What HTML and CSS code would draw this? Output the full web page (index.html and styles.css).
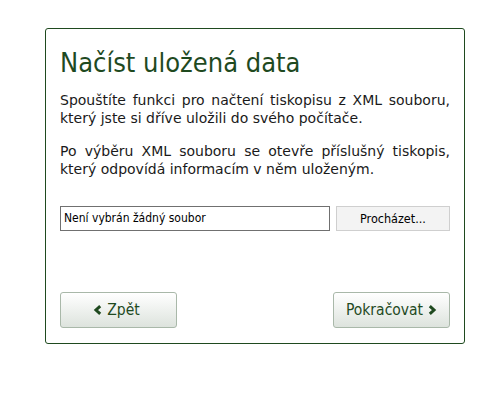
FILE: index.html
```html
<!DOCTYPE html>
<html lang="cs">
<head>
<meta charset="utf-8">
<title>Načíst uložená data</title>
<link rel="stylesheet" href="styles.css">
</head>
<body>
<div class="box">
  <h1 class="title">Načíst uložená data</h1>
  <p class="text">Spouštíte funkci pro načtení tiskopisu z XML souboru, který jste si dříve uložili do svého počítače.</p>
  <p class="text">Po výběru XML souboru se otevře příslušný tiskopis, který odpovídá informacím v něm uloženým.</p>
  <div class="file-row">
    <div class="file-name">Není vybrán žádný soubor</div>
    <button class="browse">Procházet...</button>
  </div>
  <div class="nav">
    <button class="btn btn-back"><svg class="chev" viewBox="0 0 9 10" width="9" height="10"><path d="M7.2 1.2 L3 5 L7.2 8.8" fill="none" stroke="currentColor" stroke-width="3" stroke-linejoin="miter"/></svg>Zpět</button>
    <button class="btn btn-next">Pokračovat<svg class="chev" viewBox="0 0 9 10" width="9" height="10"><path d="M1.8 1.2 L6 5 L1.8 8.8" fill="none" stroke="currentColor" stroke-width="3" stroke-linejoin="miter"/></svg></button>
  </div>
</div>
</body>
</html>
```
FILE: styles.css
```css
html, body {
  margin: 0;
  padding: 0;
  background: #fff;
}
body {
  font-family: "DejaVu Sans", sans-serif;
  color: #1a1a1a;
}
.box {
  box-sizing: border-box;
  margin: 28px 0 0 45px;
  width: 420px;
  height: 316px;
  border: 1px solid #1f4a1f;
  border-radius: 3px;
  padding: 16px 14px 14px 14px;
  display: flex;
  flex-direction: column;
}
.title {
  margin: 0;
  font-family: "DejaVu Sans Condensed", "DejaVu Sans", sans-serif;
  font-weight: normal;
  font-size: 27px;
  line-height: 36px;
  color: #1f4a1f;
}
.text {
  margin: 10px 0 0 0;
  font-size: 14px;
  line-height: 18px;
  text-align: justify;
}
.text + .text {
  margin-top: 15px;
}
.file-row {
  display: flex;
  margin-top: 28px;
  gap: 6px;
  height: 25px;
}
.file-name {
  box-sizing: border-box;
  width: 272px;
  height: 25px;
  border: 1px solid #707070;
  padding: 0 3px;
  font-family: "DejaVu Sans Condensed", "DejaVu Sans", sans-serif;
  font-size: 12px;
  line-height: 23px;
  color: #000;
}
.browse {
  box-sizing: border-box;
  width: 115px;
  height: 25px;
  border: 1px solid #cfcfcf;
  background: #f3f3f3;
  font-family: "DejaVu Sans Condensed", "DejaVu Sans", sans-serif;
  font-size: 12.5px;
  color: #000;
  padding: 0;
}
.nav {
  margin-top: auto;
  display: flex;
  justify-content: space-between;
}
.btn {
  box-sizing: border-box;
  width: 117px;
  height: 36px;
  border: 1px solid #a9b8a9;
  border-radius: 3px;
  background: linear-gradient(#ffffff, #dde3dd);
  color: #1f4a1f;
  font-family: "DejaVu Sans Condensed", "DejaVu Sans", sans-serif;
  font-size: 15.5px;
  display: flex;
  align-items: center;
  justify-content: center;
  gap: 5px;
  padding: 0;
  margin-bottom: 1px;
}
.btn-back {
  padding-right: 4px;
}
.chev {
  display: block;
}
```
